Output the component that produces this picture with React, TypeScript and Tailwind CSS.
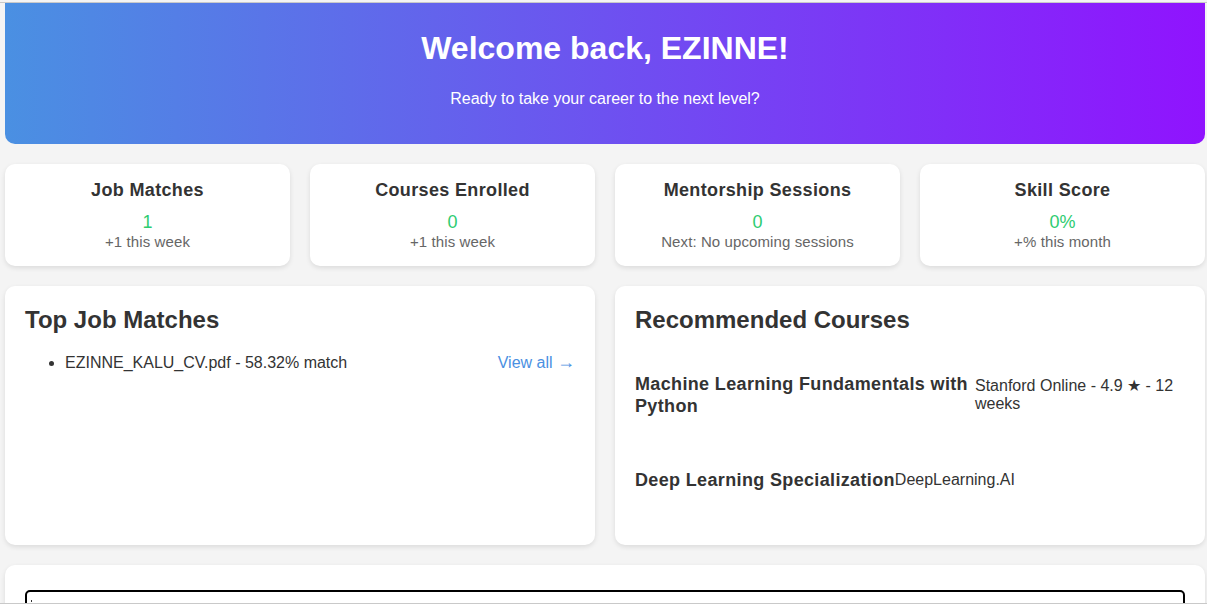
import React from "react";

const stats = [
  { title: "Job Matches", value: "1", sub: "+1 this week" },
  { title: "Courses Enrolled", value: "0", sub: "+1 this week" },
  { title: "Mentorship Sessions", value: "0", sub: "Next: No upcoming sessions" },
  { title: "Skill Score", value: "0%", sub: "+% this month" },
];

const courses = [
  { title: "Machine Learning Fundamentals with Python", meta: "Stanford Online - 4.9 ★ - 12 weeks", mt: "mt-[39px]" },
  { title: "Deep Learning Specialization", meta: "DeepLearning.AI", mt: "mt-[52px]" },
];

export default function App() {
  return (
    <div className="h-[604px] overflow-hidden bg-[#f4f4f4] pt-[2px] font-['Liberation_Sans',Arial,sans-serif] text-[#333]">
      <div className="h-[602px] overflow-hidden border-y border-[#c9c9c9]">
        <div className="ml-[5px] w-[1200px]">
          {/* banner */}
          <header className="h-[141px] rounded-b-[10px] bg-linear-to-r/srgb from-[#4a90e2] to-[#9013fe] pt-[27px] text-center text-white">
            <h1 className="text-[32px] font-bold leading-[37px]">Welcome back, EZINNE!</h1>
            <p className="mt-[23px] text-[16px] leading-[18px]">Ready to take your career to the next level?</p>
          </header>

          {/* stats */}
          <div className="mt-[20px] grid grid-cols-4 gap-[20px]">
            {stats.map((s) => (
              <div key={s.title} className="h-[102px] rounded-[10px] bg-white pt-[16px] text-center shadow-[0_2px_5px_rgba(0,0,0,0.1)]">
                <h3 className="text-[18px] font-bold leading-[21px] tracking-[0.35px]">{s.title}</h3>
                <div className="mt-[11px] text-[18px] leading-[21px] text-[#2ecc71]">{s.value}</div>
                <div className="text-[15px] leading-[17px] tracking-[0.1px] text-[#666]">{s.sub}</div>
              </div>
            ))}
          </div>

          {/* jobs + courses */}
          <div className="mt-[20px] grid grid-cols-2 gap-[20px]">
            <section className="h-[259px] rounded-[10px] bg-white px-[20px] pt-[20px] shadow-[0_2px_5px_rgba(0,0,0,0.1)]">
              <h2 className="text-[24px] font-bold leading-[28px]">Top Job Matches</h2>
              <div className="mt-[19px] flex items-center justify-between">
                <ul className="list-disc pl-[40px] text-[16px] leading-[18px]">
                  <li>EZINNE_KALU_CV.pdf - 58.32% match</li>
                </ul>
                <a className="text-[16px] leading-[18px] text-[#4a90e2]">
                  View all <span className="text-[18px]">→</span>
                </a>
              </div>
            </section>

            <section className="h-[259px] rounded-[10px] bg-white px-[20px] pt-[20px] shadow-[0_2px_5px_rgba(0,0,0,0.1)]">
              <h2 className="text-[24px] font-bold leading-[28px]">Recommended Courses</h2>
              {courses.map((c) => (
                <div key={c.title} className={`${c.mt} flex items-center`}>
                  <h4 className="text-[18px] font-bold leading-[22px] tracking-[0.35px]">{c.title}</h4>
                  <p className="text-[16px] leading-[18px]">{c.meta}</p>
                </div>
              ))}
            </section>
          </div>

          {/* bottom card */}
          <section className="mt-[20px] h-[200px] rounded-[10px] bg-white px-[20px] pt-[25px] shadow-[0_2px_5px_rgba(0,0,0,0.1)]">
            <div className="h-[150px] rounded-[5px] border-2 border-black px-[4px] pt-[8px]">
              <span className="block h-[2px] w-[1px] bg-[#333]" />
            </div>
          </section>
        </div>
      </div>
    </div>
  );
}
